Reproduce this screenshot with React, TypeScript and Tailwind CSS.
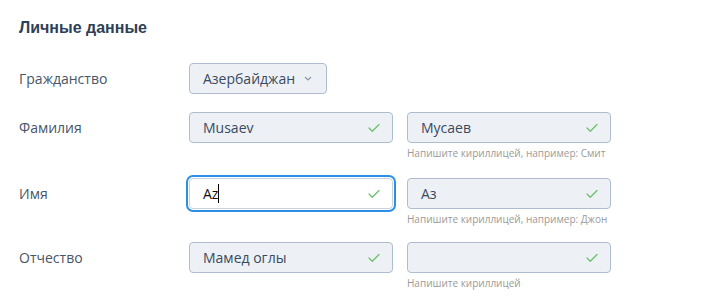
import React from 'react';

const Check: React.FC = () => (
  <svg width="12" height="9" viewBox="0 0 12 9" className="absolute right-[12px] top-1/2 -translate-y-1/2">
    <polyline points="1,4.5 4.3,7.8 11,1" fill="none" stroke="#6fc06d" strokeWidth="1.3" strokeLinecap="round" strokeLinejoin="round" />
  </svg>
);

const Field: React.FC<{ value: string; focused?: boolean; hint?: string }> = ({ value, focused, hint }) => (
  <div className="flex flex-col w-[204px]">
    <div
      className={
        focused
          ? 'relative h-[31px] rounded-[4px] border border-[#c9d3de] bg-white shadow-[0_0_0_1px_#ffffff,0_0_0_3px_#2c8ee6] flex items-center pl-[13px] text-[14px] text-[#111]'
          : 'relative h-[31px] rounded-[4px] border border-[#aebdcd] bg-[#edf1f5] flex items-center pl-[13px] text-[14px] text-[#3a4a5f]'
      }
    >
      <span>{value}</span>
      {focused && <span className="inline-block w-[1px] h-[19px] bg-black" />}
      <Check />
    </div>
    {hint !== undefined && (
      <div className="mt-[2px] h-[16px] leading-[16px] text-[10px] text-[#9a9a9a] whitespace-nowrap">{hint}</div>
    )}
  </div>
);

const Label: React.FC<{ text: string }> = ({ text }) => (
  <div className="w-[170px] h-[31px] flex items-center text-[14px] text-[#475569]">{text}</div>
);

export default function App() {
  return (
    <div className="w-[701px] h-[304px] bg-white pl-[19px] pt-[18px] overflow-hidden" style={{ fontFamily: '"Open Sans", sans-serif' }}>
      <h2 className="text-[16px] leading-[20px] font-bold text-[#2e3f57]" style={{ fontFamily: '"Liberation Sans", Arial, sans-serif' }}>
        Личные данные
      </h2>

      <div className="mt-[25px] flex items-start">
        <Label text="Гражданство" />
        <div className="h-[31px] w-[138px] rounded-[4px] border border-[#aebdcd] bg-[#edf1f5] flex items-center pl-[13px] text-[14px] text-[#3a4a5f]">
          <span>Азербайджан</span>
          <svg width="8" height="5" viewBox="0 0 8 5" className="ml-[9px]">
            <polyline points="1,1 4,4 7,1" fill="none" stroke="#8896a6" strokeWidth="1.1" />
          </svg>
        </div>
      </div>

      <div className="mt-[18px] flex items-start">
        <Label text="Фамилия" />
        <div className="flex gap-[14px]">
          <Field value="Musaev" />
          <Field value="Мусаев" hint="Напишите кириллицей, например: Смит" />
        </div>
      </div>

      <div className="mt-[17px] flex items-start">
        <Label text="Имя" />
        <div className="flex gap-[14px]">
          <Field value="Az" focused />
          <Field value="Аз" hint="Напишите кириллицей, например: Джон" />
        </div>
      </div>

      <div className="mt-[15px] flex items-start">
        <Label text="Отчество" />
        <div className="flex gap-[14px]">
          <Field value="Мамед оглы" />
          <Field value="" hint="Напишите кириллицей" />
        </div>
      </div>
    </div>
  );
}
